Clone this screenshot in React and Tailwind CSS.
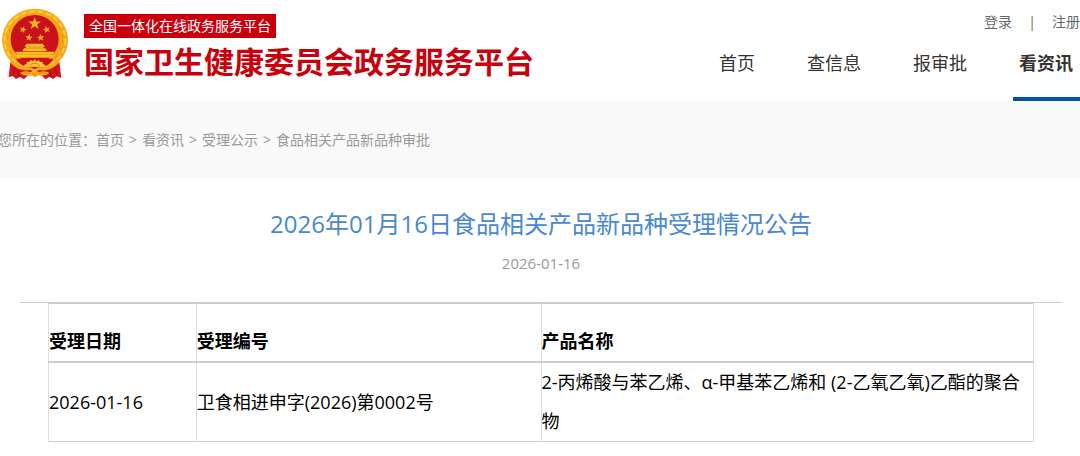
import { Fragment } from "react";

const navItems = [
  { label: "首页", active: false },
  { label: "查信息", active: false },
  { label: "报审批", active: false },
  { label: "看资讯", active: true },
];

const breadcrumbs = ["首页", "看资讯", "受理公示", "食品相关产品新品种审批"];

const records = [
  {
    date: "2026-01-16",
    number: "卫食相进申字(2026)第0002号",
    product: "2-丙烯酸与苯乙烯、α-甲基苯乙烯和 (2-乙氧乙氧)乙酯的聚合物",
  },
];

const STAR =
  "M0,-10 L2.4,-3.2 L9.5,-3.1 L3.8,1.2 L5.9,8.1 L0,4 L-5.9,8.1 L-3.8,1.2 L-9.5,-3.1 L-2.4,-3.2 Z";

const Emblem = () => (
  <svg
    viewBox="0 0 216 252"
    className="h-[84px] w-[72px] shrink-0"
    role="img"
    aria-label="国徽"
  >
    <defs>
      <linearGradient id="gold" x1="0" y1="0" x2="1" y2="1">
        <stop offset="0" stopColor="#f9b51c" />
        <stop offset="0.5" stopColor="#f7aa1a" />
        <stop offset="1" stopColor="#f2a017" />
      </linearGradient>
    </defs>
    {/* wreath */}
    <ellipse cx="105" cy="120" rx="99" ry="94" fill="url(#gold)" />
    <ellipse
      cx="105"
      cy="120"
      rx="91"
      ry="86"
      fill="none"
      stroke="#ffcf45"
      strokeWidth="5"
      strokeDasharray="16 9"
    />
    <ellipse
      cx="105"
      cy="120"
      rx="82"
      ry="78"
      fill="none"
      stroke="#e58f12"
      strokeWidth="3"
      strokeDasharray="11 12"
    />
    <circle cx="104" cy="117" r="72" fill="#cb111b" />
    <g fill="#f8b420">
      <path d={STAR} transform="translate(104 71) scale(2)" />
      <path d={STAR} transform="translate(69 89) rotate(18) scale(1.15)" />
      <path d={STAR} transform="translate(140 89) rotate(-18) scale(1.15)" />
      <path d={STAR} transform="translate(87 113) rotate(8) scale(1.15)" />
      <path d={STAR} transform="translate(122 113) rotate(-8) scale(1.15)" />
    </g>
    {/* gate */}
    <g fill="#fbc026">
      <path d="M80,131 H128 L135,140 H73 Z" />
      <path d="M78,140 H130 V145 H78 Z" />
      <path d="M72,145 H136 L141,153 H67 Z" />
      <path d="M46,155 H162 V161 H158 V173 H50 V161 H46 Z" />
    </g>
    <path
      d="M80,143 H128 M74,154 H134 M52,163 H156"
      stroke="#dd8511"
      strokeWidth="1.5"
    />
    {/* red hangings beside the knot */}
    <path
      d="M31,186 L26,232 L38,228 L48,237 L60,231 L72,238 L84,226 L124,226 L136,238 L148,231 L160,237 L170,229 L184,234 L178,186 Q150,208 104,200 Q58,208 31,186 Z"
      fill="#d3141f"
    />
    <path
      d="M42,204 L39,228 M58,210 L56,230 M150,210 L152,230 M166,204 L170,228"
      stroke="#960d15"
      strokeWidth="3"
      fill="none"
    />
    {/* gear */}
    <path
      d="M48,176 H160 Q153,190 138,197 H70 Q55,190 48,176 Z"
      fill="#cb111b"
    />
    <path
      d="M76,200 L72,195 L80,192 L80,185 L88,186 L92,180 L99,184 L104,178 L109,184 L116,180 L120,186 L128,185 L128,192 L136,195 L132,200 Z"
      fill="#ffc62b"
    />
    <path
      d="M90,200 A14,10 0 0 1 118,200"
      stroke="#dd8511"
      strokeWidth="3"
      fill="none"
    />
    {/* stalks tied together under the gear */}
    <path
      d="M36,180 Q62,205 90,201 L104,208 L118,201 Q146,205 172,180 L176,190 Q150,216 118,210 L104,216 L90,210 Q58,216 32,190 Z"
      fill="#f4a519"
    />
    <path
      d="M60,219 Q75,210 90,217 L104,211 L118,217 Q133,210 148,219 Q134,230 118,225 L104,232 L90,225 Q74,230 60,219 Z"
      fill="#f7b01c"
    />
    <path
      d="M70,220 Q82,216 91,221 M138,220 Q126,216 117,221 M96,219 L104,225 L112,219"
      stroke="#c96b0a"
      strokeWidth="2"
      fill="none"
    />
  </svg>
);

const Header = () => (
  <header className="flex justify-between bg-white">
    <div className="flex h-[101px]">
      <Emblem />
      <div className="ml-3 pt-3.5">
        <p className="w-fit bg-[#c7000b] px-[5px] text-sm leading-6 text-white">
          全国一体化在线政务服务平台
        </p>
        <h1 className="mt-0.5 text-[30px] leading-[44px] font-bold whitespace-nowrap text-[#c7000b]">
          国家卫生健康委员会政务服务平台
        </h1>
      </div>
    </div>

    <div className="flex flex-col items-end justify-between whitespace-nowrap">
      <div className="flex items-center pt-3 text-sm leading-5 text-[#666]">
        <a href="#login">登录</a>
        <span className="w-10 text-center">|</span>
        <a href="#register">注册</a>
      </div>
      <nav className="flex gap-10 text-lg text-[#333]">
        {navItems.map((item) => (
          <a
            key={item.label}
            href="#nav"
            className={
              item.active
                ? "border-b-4 border-[#00569d] pr-[7px] pb-5 pl-1.5 font-bold"
                : "border-b-4 border-transparent px-1.5 pb-5"
            }
          >
            {item.label}
          </a>
        ))}
      </nav>
    </div>
  </header>
);

const Breadcrumb = () => (
  <div className="bg-[#f9f9f9] pt-[29px] pb-7">
    <div className="-ml-0.5 flex gap-[5px] text-sm leading-5 text-[#999]">
      {breadcrumbs.map((crumb, index) => (
        <Fragment key={crumb}>
          {index === 0 ? (
            <span>
              您所在的位置：<a href="#crumb">{crumb}</a>
            </span>
          ) : (
            <>
              <span>&gt;</span>
              <a href="#crumb">{crumb}</a>
            </>
          )}
        </Fragment>
      ))}
    </div>
  </div>
);

const App = () => {
  return (
    <div
      lang="zh-CN"
      className="min-h-screen overflow-x-hidden bg-white font-['Open_Sans','Noto_Sans_CJK_SC',sans-serif]"
    >
      <Header />
      <Breadcrumb />

      <main className="mr-[18px] ml-5">
        <div className="pt-7 pb-7 text-center">
          <h2 className="text-2xl leading-9 text-[#4788d2]">
            2026年01月16日食品相关产品新品种受理情况公告
          </h2>
          <p className="mt-2.5 text-[15px] leading-[22px] text-[#999]">
            2026-01-16
          </p>
        </div>

        <div className="border-t border-[#ccc] px-7">
          <table className="w-full table-fixed border-collapse border border-[#ccc] text-lg leading-[39px] text-black">
            <thead>
              <tr className="border-b-2 border-[#ccc] text-left">
                <th className="w-[15%] border-x border-[#ddd] p-0 pt-[18px] font-bold">
                  受理日期
                </th>
                <th className="w-[35%] border-x border-[#ddd] p-0 pt-[18px] font-bold">
                  受理编号
                </th>
                <th className="border-x border-[#ddd] p-0 pt-[18px] font-bold">
                  产品名称
                </th>
              </tr>
            </thead>
            <tbody>
              {records.map((record) => (
                <tr key={record.number}>
                  <td className="border-x border-[#ddd] p-0">{record.date}</td>
                  <td className="border-x border-[#ddd] p-0">
                    {record.number}
                  </td>
                  <td className="border-x border-[#ddd] p-0">
                    {record.product}
                  </td>
                </tr>
              ))}
            </tbody>
          </table>
        </div>
      </main>
    </div>
  );
};

export default App;
